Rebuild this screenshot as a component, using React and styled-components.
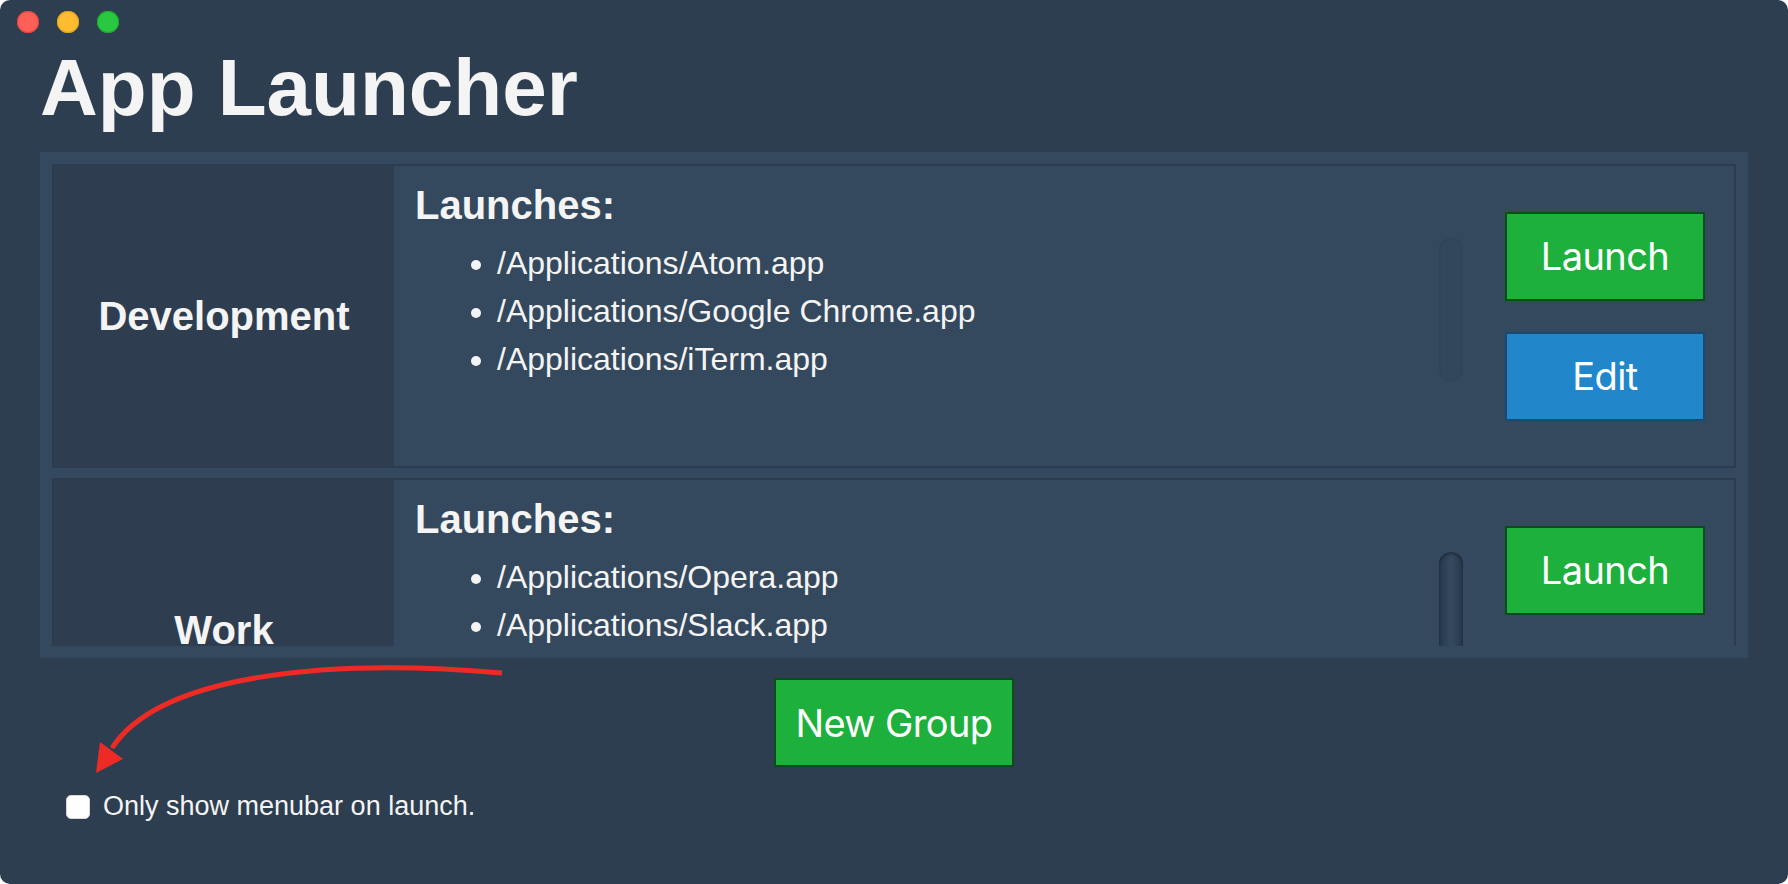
import React, { useState } from "react";
import styled, { createGlobalStyle } from "styled-components";

const groups = [
  {
    name: "Development",
    apps: [
      "/Applications/Atom.app",
      "/Applications/Google Chrome.app",
      "/Applications/iTerm.app",
    ],
  },
  {
    name: "Work",
    apps: ["/Applications/Opera.app", "/Applications/Slack.app"],
    scrolling: true,
  },
];

const App = () => {
  const [menubarOnly, setMenubarOnly] = useState(false);

  return (
    <>
      <GlobalStyle />
      <Window>
        <TitleBar>
          <Light $color="#fe5f57" $edge="#e0443e" />
          <Light $color="#febc2e" $edge="#dea123" />
          <Light $color="#2ac840" $edge="#1aab29" />
        </TitleBar>
        <Main>
          <Title>App Launcher</Title>
          <GroupsPanel>
            <GroupsViewport>
              {groups.map((group) => (
                <GroupCard key={group.name}>
                  <GroupName>{group.name}</GroupName>
                  <GroupBody>
                    <Heading>Launches:</Heading>
                    <AppList>
                      {group.apps.map((app) => (
                        <li key={app}>{app}</li>
                      ))}
                    </AppList>
                  </GroupBody>
                  <ScrollTrack>
                    <ScrollThumb $active={group.scrolling} />
                  </ScrollTrack>
                  <Actions>
                    <Button $variant="launch">Launch</Button>
                    <Button $variant="edit">Edit</Button>
                  </Actions>
                </GroupCard>
              ))}
            </GroupsViewport>
          </GroupsPanel>
          <Footer>
            <Button $variant="launch" $wide>
              New Group
            </Button>
          </Footer>
          <OptionRow>
            <CheckBox
              type="checkbox"
              checked={menubarOnly}
              onChange={(e) => setMenubarOnly(e.target.checked)}
            />
            <OptionLabel>Only show menubar on launch.</OptionLabel>
          </OptionRow>
        </Main>
        <Annotation viewBox="0 0 440 130" width="440" height="130">
          <path
            d="M412 13 C 240 -2, 70 14, 22 88"
            fill="none"
            stroke="#ee2a24"
            strokeWidth="5"
          />
          <polygon points="6,113 10,82 33,99" fill="#ee2a24" />
        </Annotation>
      </Window>
    </>
  );
};

const GlobalStyle = createGlobalStyle`
  html, body {
    margin: 0;
    background: #ffffff;
  }
  body {
    font-family: "Liberation Sans", Arial, sans-serif;
  }
  * {
    box-sizing: border-box;
  }
`;

const Window = styled.div`
  position: relative;
  height: 884px;
  background-color: #2d3e50;
  border-radius: 10px;
  overflow: hidden;
  color: #f4f4f4;
`;

const TitleBar = styled.div`
  display: flex;
  align-items: center;
  gap: 18px;
  height: 44px;
  padding-left: 17px;
`;

const Light = styled.span`
  width: 22px;
  height: 22px;
  border-radius: 50%;
  background-color: ${(props) => props.$color};
  box-shadow: inset 0 0 0 1px ${(props) => props.$edge};
`;

const Main = styled.div`
  display: flex;
  flex-direction: column;
  padding: 0 40px;
`;

const Title = styled.h1`
  margin: 4px 0 0;
  font-size: 80px;
  line-height: 80px;
  font-weight: 700;
  color: #f4f4f4;
`;

const GroupsPanel = styled.div`
  margin-top: 24px;
  height: 506px;
  padding: 12px;
  background-color: #34495e;
`;

const GroupsViewport = styled.div`
  height: 100%;
  display: flex;
  flex-direction: column;
  gap: 10px;
  overflow: hidden;
`;

const GroupCard = styled.div`
  flex: 0 0 304px;
  display: flex;
  border: 2px solid #2c3c4e;
  background-color: #34495e;
`;

const GroupName = styled.div`
  width: 340px;
  flex-shrink: 0;
  display: flex;
  align-items: center;
  justify-content: center;
  background-color: #2e3e50;
  font-size: 40px;
  font-weight: 700;
`;

const GroupBody = styled.div`
  flex: 1;
  padding: 16px 21px 0;
`;

const Heading = styled.h2`
  margin: 0;
  font-size: 40px;
  line-height: 46px;
  font-weight: 700;
`;

const AppList = styled.ul`
  margin: 11px 0 0;
  padding-left: 82px;
  font-size: 32px;
  line-height: 48px;
`;

const ScrollTrack = styled.div`
  width: 24px;
  flex-shrink: 0;
  padding-top: 72px;
`;

const ScrollThumb = styled.div`
  height: 143px;
  border-radius: 12px;
  ${(props) =>
    props.$active
      ? `
    height: 200px;
    background: linear-gradient(90deg, #26384a 0%, #34495e 45%, #34495e 55%, #26384a 100%);
    box-shadow: inset 0 2px 3px rgba(0, 0, 0, 0.35);
  `
      : `
    background-color: #33475b;
    box-shadow: inset 0 0 0 2px #31455a;
  `}
`;

const Actions = styled.div`
  width: 200px;
  flex-shrink: 0;
  margin: 0 29px 0 42px;
  display: flex;
  flex-direction: column;
  justify-content: center;
  gap: 31px;
`;

const Button = styled.button`
  height: 89px;
  width: ${(props) => (props.$wide ? "auto" : "200px")};
  padding: 0 ${(props) => (props.$wide ? "19px" : "0")};
  border: 2px solid
    ${(props) => (props.$variant === "edit" ? "#174b74" : "#0c4c1c")};
  background-color: ${(props) =>
    props.$variant === "edit" ? "#2186ca" : "#1db03c"};
  color: #ffffff;
  font-family: Inter, "Liberation Sans", sans-serif;
  font-size: 38px;
  letter-spacing: -0.6px;
  cursor: pointer;
`;

const Footer = styled.div`
  display: flex;
  justify-content: center;
  margin-top: 20px;
`;

const OptionRow = styled.label`
  display: flex;
  align-items: center;
  gap: 13px;
  margin: 24px 0 0 26px;
`;

const CheckBox = styled.input`
  appearance: none;
  margin: 0;
  width: 24px;
  height: 24px;
  border-radius: 5px;
  background-color: #ffffff;
  border: 1px solid #d8d8d8;
`;

const OptionLabel = styled.span`
  font-size: 27px;
  color: #f4f4f4;
`;

const Annotation = styled.svg`
  position: absolute;
  left: 90px;
  top: 660px;
  pointer-events: none;
`;

export default App;
